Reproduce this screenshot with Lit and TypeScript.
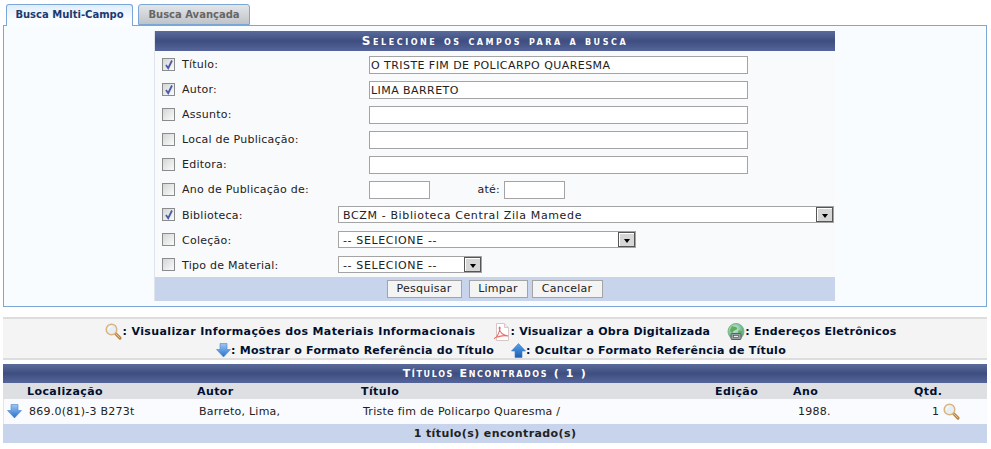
import { LitElement, html, css, svg } from "lit";
import { customElement } from "lit/decorators.js";

const lens = () => html`<svg class="ico" width="17" height="17" viewBox="0 0 17 17"><path d="M10.500 10.500l4.500 4.600" stroke="#b98443" stroke-width="3" stroke-linecap="round"/><path d="M10.800 10.800l4 4" stroke="#eec68c" stroke-width="1"/><circle cx="6.500" cy="6.500" r="5.300" fill="#e6eef6" stroke="#dcb47c" stroke-width="1.500"/><path d="M3.500 6.500a3 3 0 0 1 3-3" fill="none" stroke="#fff" stroke-width="1"/></svg>`;
const pdf = html`<svg class="ico" width="18" height="18" viewBox="0 0 18 18"><path d="M3.500.5h8l4 4v13h-12z" fill="#fff" stroke="#d8c6c6"/><path d="M11.500.5v4h4" fill="#f2eeee" stroke="#d8c6c6"/><path d="M1 15.500c3-1 5-5 6-10 .3-2-1-2-.8 0 .4 3 3 6.500 9 7.500-4-.8-8-.3-11 1.200" fill="none" stroke="#ea6a64" stroke-width="1.100"/></svg>`;
const globe = html`<svg class="ico" width="18" height="18" viewBox="0 0 18 18"><defs><radialGradient id="gg" cx=".4" cy=".35" r=".75"><stop offset="0" stop-color="#d4f0e4"/><stop offset=".55" stop-color="#7cc0a4"/><stop offset="1" stop-color="#4a9c58"/></radialGradient></defs><circle cx="9" cy="8.500" r="8" fill="url(#gg)" stroke="#7ab484"/><path d="M5 3c2 1 4 0 5 2s-3 2-4 4-3 0-3-2zM11 8c2-1 4 0 4 1s-1 3-3 3z" fill="#62ac5c"/><rect x="4" y="10.500" width="10" height="6" rx="1" fill="#9a9fa3" stroke="#5a5f64"/><rect x="6.500" y="12.500" width="5" height="2" fill="#eceef0" stroke="#44484c" stroke-width=".6"/></svg>`;
const down = html`<svg class="ico" width="15" height="15" viewBox="0 0 15 15"><defs><linearGradient id="dn" x1="0" y1="0" x2="0" y2="1"><stop offset="0" stop-color="#9cc8f2"/><stop offset="1" stop-color="#2a70cc"/></linearGradient></defs><path d="M4 .5h7v6h3.500l-7 7.500-7-7.500h3.500z" fill="url(#dn)" stroke="#4a88d0" stroke-width=".6"/></svg>`;
const up = html`<svg class="ico" width="15" height="15" viewBox="0 0 15 15"><defs><linearGradient id="upg" x1="0" y1="0" x2="0" y2="1"><stop offset="0" stop-color="#5aa2ea"/><stop offset="1" stop-color="#1b5fb4"/></linearGradient></defs><path d="M7.500 .5l7 7.500h-3.500v6.500h-7v-6.500h-3.500z" fill="url(#upg)" stroke="#3a78c4" stroke-width=".6"/></svg>`;
const checkMark = svg`<path d="M3 6l2.200 3.200L9 1.500" fill="none" stroke="#4a5aa8" stroke-width="1.800"/>`;

interface Row { label: string; on?: boolean; value?: string; kind: "input" | "range" | "select"; width?: number; }
const rows: Row[] = [
  { label: "Título:", on: true, value: "O TRISTE FIM DE POLICARPO QUARESMA", kind: "input" },
  { label: "Autor:", on: true, value: "LIMA BARRETO", kind: "input" },
  { label: "Assunto:", kind: "input" },
  { label: "Local de Publicação:", kind: "input" },
  { label: "Editora:", kind: "input" },
  { label: "Ano de Publicação de:", kind: "range" },
  { label: "Biblioteca:", on: true, value: "BCZM - Biblioteca Central Zila Mamede", kind: "select", width: 496 },
  { label: "Coleção:", value: "-- SELECIONE --", kind: "select", width: 298 },
  { label: "Tipo de Material:", value: "-- SELECIONE --", kind: "select", width: 144 },
];

@customElement("app-root")
export class AppRoot extends LitElement {
  static styles = css`
    :host { display: block; width: 991px; height: 449px; box-sizing: border-box; padding: 4px 4px 0 3px; background: #fff;
      font: 11px/14px "DejaVu Sans", Verdana, sans-serif; letter-spacing: .25px; color: #222; overflow: hidden; }
    .tabs { display: flex; gap: 5px; padding-left: 3px; height: 21px; position: relative; z-index: 1; }
    .tab { box-sizing: border-box; height: 21px; border: 1px solid #7ba7d6; border-radius: 3px 3px 0 0; font-weight: bold;
      font-size: 10px; letter-spacing: 0; text-align: center; line-height: 20px; }
    .tab.on { width: 127px; height: 22px; border-bottom: 0; color: #1a3a70; background: linear-gradient(#dfeefb, #fafdff 70%); }
    .tab.off { width: 112px; color: #666; background: linear-gradient(#e4e6e8, #bfc3c8); }
    .panel { box-sizing: border-box; height: 282px; border: 1px solid #7ba7d6; background: #f9fcff; padding: 5px 0 0; }
    .form { width: 681px; margin-left: 150px; background: #f9fafc; border-left: 1px solid #dfe4ec; box-sizing: border-box; }
    .cap { height: 20px; line-height: 20px; text-align: center; color: #fff; font-weight: bold; font-size: 12px; font-variant: small-caps;
      letter-spacing: 2.55px; background: linear-gradient(#5a6b9a, #3f4e80 50%, #55659a); }
    .grid { display: grid; grid-template-columns: 27px 156px 31px 1fr; grid-auto-rows: 25px; padding-top: 1px; align-items: center; }
    .chk { box-sizing: border-box; width: 13px; height: 13px; margin-left: 7px; border: 1px solid #8a8b8b;
      background: linear-gradient(135deg, #d4d5d6, #fbfbfb); }
    .chk svg { display: block; }
    .low { padding-top: 2px; }
    .inp { box-sizing: border-box; height: 18px; border: 1px solid #a4a4a4; background: #fff; line-height: 17px; padding-left: 1px;
      color: #222; white-space: nowrap; letter-spacing: .44px; }
    .field { grid-column: 4; }
    .main { width: 379px; }
    .range { display: flex; align-items: center; }
    .small { width: 61px; }
    .ate { width: 74px; text-align: right; padding-right: 4px; box-sizing: border-box; }
    .wide { grid-column: 3 / 5; }
    .sel { box-sizing: border-box; height: 17px; border: 1px solid #a4a4a4; background: #fff; display: flex; justify-content: space-between;
      line-height: 17px; padding-left: 4px; letter-spacing: .63px; }
    .sel i { box-sizing: border-box; width: 17px; height: 15px; border: 1px solid #555; box-shadow: inset 1px 1px 0 #fff; background: #d6d6d6;
      display: flex; align-items: flex-end; justify-content: center; padding-bottom: 3px; }
    .sel i::after { content: ""; border: 3.500px solid transparent; border-top: 4px solid #000; border-bottom: 0; }
    .foot { height: 24px; background: #c8d4eb; display: flex; justify-content: center; align-items: center; padding-right: 1px; }
    .btn { box-sizing: border-box; height: 18px; border: 1px solid #a4a4a4; background: #f4f4f4; line-height: 16px; text-align: center; color: #222; }
    .b1 { width: 75px; }
    .b2 { width: 59px; margin: 0 4px 0 7px; }
    .b3 { width: 71px; }
    .legend { box-sizing: border-box; height: 43px; margin-top: 10px; background: #f4f4f4; border-top: 2px solid #ddd; border-bottom: 2px solid #ddd;
      padding: 3px 0 0 12px; font-weight: bold; color: #001030; letter-spacing: .25px; }
    .line { display: flex; justify-content: center; align-items: center; height: 19px; white-space: nowrap; }
    .line > span { display: flex; align-items: center; }
    .line > span + span { margin-left: 17px; }
    .line > .first { letter-spacing: .38px; }
    .ico { flex: none; display: block; }
    .results { margin-top: 4px; }
    .rcap { height: 19px; line-height: 19px; text-align: center; color: #fff; font-variant: small-caps; font-weight: bold; letter-spacing: 1.65px;
      background: linear-gradient(#5a6b9a, #3f4e80 50%, #55659a); }
    .tr { display: grid; grid-template-columns: 24px 170px 164px 354px 78px 121px 1fr; align-items: center; }
    .th { height: 16px; padding-top: 1px; box-sizing: border-box; background: #dedfe3; font-weight: bold; color: #001030; letter-spacing: .42px; }
    .td { height: 25px; background: #f9fbff; box-shadow: inset 1px 0 0 #e4e4e4; color: #222; }
    .td .d { padding-left: 2px; }
    .td .y { padding-left: 5px; }
    .ic { padding-left: 4px; }
    .qty { display: flex; align-items: center; gap: 4px; padding-left: 18px; }
    .tfoot { height: 19px; line-height: 20px; background: #c8d4eb; text-align: center; font-weight: bold; color: #222; letter-spacing: .4px; }
  `;

  private field(r: Row) {
    if (r.kind === "input") return html`<div class="field inp main">${r.value ?? ""}</div>`;
    if (r.kind === "range") return html`<div class="field range"><div class="inp small"></div><div class="ate">até:</div><div class="inp small"></div></div>`;
    return html`<div class="wide"><div class="sel" style="width:${r.width}px"><span>${r.value}</span><i></i></div></div>`;
  }

  render() {
    return html`
      <div class="tabs"><div class="tab on">Busca Multi-Campo</div><div class="tab off">Busca Avançada</div></div>
      <div class="panel">
        <div class="form">
          <div class="cap">Selecione os campos para a busca</div>
          <div class="grid">
            ${rows.map(r => html`
              <div class="chk">${r.on ? html`<svg width="11" height="11" viewBox="0 0 11 11">${checkMark}</svg>` : ""}</div>
              <div class=${r.kind === "select" ? "low" : ""}>${r.label}</div>
              ${this.field(r)}`)}
          </div>
          <div class="foot">
            <div class="btn b1">Pesquisar</div>
            <div class="btn b2">Limpar</div>
            <div class="btn b3">Cancelar</div>
          </div>
        </div>
      </div>
      <div class="legend">
        <div class="line">
          <span class="first">${lens()}: Visualizar Informações dos Materiais Informacionais</span>
          <span>${pdf}: Visualizar a Obra Digitalizada</span>
          <span>${globe}: Endereços Eletrônicos</span>
        </div>
        <div class="line">
          <span>${down}: Mostrar o Formato Referência do Título</span>
          <span>${up}: Ocultar o Formato Referência de Título</span>
        </div>
      </div>
      <div class="results">
        <div class="rcap">Títulos Encontrados ( 1 )</div>
        <div class="tr th"><div></div><div>Localização</div><div>Autor</div><div>Título</div><div>Edição</div><div>Ano</div><div>Qtd.</div></div>
        <div class="tr td">
          <div class="ic">${down}</div><div class="d">869.0(81)-3 B273t</div><div class="d">Barreto, Lima,</div>
          <div class="d">Triste fim de Policarpo Quaresma /</div><div></div><div class="y">1988.</div>
          <div class="qty"><span>1</span>${lens()}</div>
        </div>
        <div class="tfoot">1 título(s) encontrado(s)</div>
      </div>
    `;
  }
}
